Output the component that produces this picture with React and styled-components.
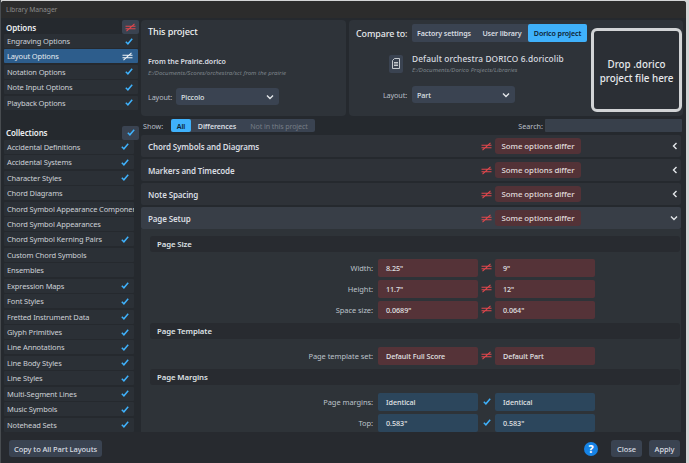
import React from "react";
import styled, { createGlobalStyle } from "styled-components";

const Global = createGlobalStyle`
  html, body { margin: 0; padding: 0; background: #d4d5d6; }
  * { box-sizing: border-box; }
  body { font-family: "Noto Sans", "Open Sans", sans-serif; }
`;

const Page = styled.div`
  width: 689px;
  height: 463px;
  overflow: hidden;
  padding: 1px 3px 0 0;
  border-left: 1px solid #484c50;
  background: #d4d5d6;
`;
const Dialog = styled.div`
  width: 685px;
  height: 462px;
  display: flex;
  flex-direction: column;
  background: #25292e;
  border-radius: 3px 3px 0 0;
  overflow: hidden;
`;
const TitleBar = styled.div`
  height: 17px;
  flex: none;
  background: #2c2c2c;
  color: #8a8a8a;
  font-size: 6.8px;
  letter-spacing: -0.1px;
  line-height: 17px;
  padding-left: 5px;
`;
const Main = styled.div`
  flex: 1;
  min-height: 0;
  display: flex;
  gap: 2px;
  padding: 2px 0 0 3px;
`;
const Side = styled.aside`
  width: 135px;
  flex: none;
  overflow: hidden;
`;
const SideHead = styled.div`
  display: flex;
  align-items: center;
  justify-content: space-between;
  height: 14px;
  margin-top: ${(p) => (p.$second ? "16px" : "0")};
  color: #eceef0;
  font-size: 8px;
  letter-spacing: -0.12px;
  font-weight: 600;
  padding-left: 2px;
`;
const SquareBtn = styled.div`
  width: 17px;
  height: 14px;
  border-radius: 2px;
  background: #3a4351;
  display: flex;
  align-items: center;
  justify-content: center;
`;
const ListRow = styled.div`
  width: ${(p) => (p.$short ? "129.5px" : "134px")};
  height: 14px;
  margin-bottom: 1.45px;
  padding: 0 5px 0 3px;
  display: flex;
  align-items: center;
  justify-content: space-between;
  background: ${(p) => (p.$active ? "#2d5d8c" : "#2b3036")};
  border-radius: 1px;
  color: ${(p) => (p.$active ? "#e4eaf0" : "#cdd1d6")};
  font-size: 7.5px;
  letter-spacing: -0.14px;
  white-space: nowrap;
  overflow: hidden;
`;
const RowLabel = styled.span`
  flex: 1;
  min-width: 0;
`;
const Content = styled.main`
  flex: 1;
  min-width: 0;
  display: flex;
  flex-direction: column;
`;
const TopPanels = styled.div`
  display: flex;
  gap: 3px;
  height: 96px;
  flex: none;
  padding-right: 3px;
`;
const Panel = styled.section`
  background: #2e3339;
  border-radius: 4px;
`;
const ProjectPanel = styled(Panel)`
  width: 205px;
  padding: 5px 7px;
`;
const PanelTitle = styled.h2`
  margin: 0;
  font-size: 9.2px;
  letter-spacing: -0.12px;
  line-height: 14px;
  font-weight: 500;
  color: #eef0f2;
`;
const FileName = styled.div`
  font-size: ${(p) => (p.$wide ? "8.3px" : "7.1px")};
  letter-spacing: ${(p) => (p.$wide ? "0.12px" : "-0.08px")};
  line-height: 11px;
  font-weight: ${(p) => (p.$wide ? 500 : 600)};
  color: #d9dce0;
  white-space: nowrap;
  margin-top: ${(p) => p.$top || 0}px;
`;
const FilePath = styled.div`
  font-size: 6.1px;
  line-height: 9px;
  font-style: italic;
  color: #7d838a;
  white-space: nowrap;
  margin-top: 1px;
`;
const LayoutRow = styled.div`
  display: flex;
  align-items: center;
  gap: 5px;
  margin-top: ${(p) => p.$top}px;
`;
const LayoutLabel = styled.span`
  font-size: 7.2px;
  letter-spacing: -0.1px;
  color: #b9bfc6;
  width: ${(p) => p.$w}px;
  text-align: right;
`;
const Select = styled.div`
  width: 103px;
  height: 17px;
  background: #3a4351;
  border-radius: 3px;
  padding: 0 5px;
  display: flex;
  align-items: center;
  justify-content: space-between;
  color: #dfe2e6;
  font-size: 7.2px;
  letter-spacing: -0.1px;
  font-weight: 500;
`;
const ComparePanel = styled(Panel)`
  flex: 1;
  display: flex;
  padding: 4px 1px 4px 7px;
  gap: 4px;
`;
const CompareMain = styled.div`
  width: 231px;
  flex: none;
`;
const CompareTop = styled.div`
  display: flex;
  align-items: center;
  gap: 5px;
  height: 18px;
`;
const CompareLabel = styled.span`
  width: 51px;
  font-size: 8.9px;
  letter-spacing: -0.08px;
  font-weight: 500;
  color: #e6e9ec;
  white-space: nowrap;
`;
const Segments = styled.div`
  display: flex;
  background: #3a4351;
  border-radius: 2px;
  height: ${(p) => (p.$small ? "13px" : "18px")};
`;
const Segment = styled.div`
  display: flex;
  align-items: center;
  justify-content: center;
  width: ${(p) => p.$w}px;
  border-radius: 2px;
  background: ${(p) => (p.$on ? "#3fb1fb" : "transparent")};
  color: ${(p) => (p.$on ? "#0d2233" : p.$dim ? "#767d86" : "#d8dce0")};
  font-size: 7.1px;
  letter-spacing: -0.1px;
  font-weight: ${(p) => (p.$dim ? 400 : 600)};
  white-space: nowrap;
`;
const LibRow = styled.div`
  display: flex;
  align-items: center;
  gap: 9px;
  margin: 11px 0 0 33px;
`;
const DocBox = styled.div`
  width: 14px;
  height: 18px;
  background: #3a4351;
  border-radius: 2px;
  display: flex;
  align-items: center;
  justify-content: center;
`;
const DropZone = styled.div`
  flex: 1;
  margin-top: 4px;
  padding-top: 3px;
  border: 3px solid #d2d4d6;
  border-radius: 6px;
  display: flex;
  align-items: center;
  justify-content: center;
  text-align: center;
  background: #2b2f35;
  color: #e6e9ec;
  font-size: 9.8px;
  line-height: 13.5px;
  font-weight: 500;
`;
const ShowBar = styled.div`
  height: 13px;
  flex: none;
  margin: 3px 4px 3px 2px;
  display: flex;
  align-items: center;
`;
const ShowLabel = styled.span`
  font-size: 7.2px;
  width: 28px;
  color: #b9bfc6;
`;
const SearchLabel = styled.span`
  font-size: 7.2px;
  color: #b9bfc6;
  margin-right: 2px;
`;
const Spacer = styled.div`
  flex: 1;
`;
const SearchBox = styled.div`
  width: 137px;
  height: 13px;
  background: #38404b;
  border-radius: 1px;
`;
const Sections = styled.div`
  flex: 1;
  min-height: 0;
  width: 540px;
  display: flex;
  flex-direction: column;
  gap: 2px;
  overflow: hidden;
`;
const SectionHead = styled.div`
  height: 22px;
  flex: none;
  background: ${(p) => (p.$open ? "#383e47" : "#2e3238")};
  border-radius: 2px;
  display: flex;
  align-items: center;
  padding-left: 7px;
`;
const SectionTitle = styled.div`
  flex: 1;
  font-size: 8px;
  letter-spacing: -0.13px;
  font-weight: 600;
  color: #d8dce0;
`;
const Pill = styled.div`
  width: 86px;
  height: 16px;
  margin-left: 3px;
  background: #533237;
  border-radius: 3px;
  display: flex;
  align-items: center;
  justify-content: center;
  font-size: 7.9px;
  letter-spacing: -0.06px;
  font-weight: 500;
  color: #e0dcdc;
`;
const ChevronSlot = styled.div`
  width: 100px;
  display: flex;
  justify-content: flex-end;
  padding-right: 3px;
`;
const SectionBody = styled.div`
  flex: 1;
  min-height: 0;
  margin-top: -2px;
  padding: 7px 1px 0 9px;
  background: #2e3338;
  overflow: hidden;
`;
const GroupHead = styled.div`
  height: 16px;
  margin-top: ${(p) => (p.$first ? 0 : 4)}px;
  margin-bottom: ${(p) => (p.$first ? 6 : 7)}px;
  padding-left: 7px;
  background: #282b30;
  border-radius: 3px;
  font-size: 7.8px;
  letter-spacing: -0.1px;
  line-height: 16px;
  font-weight: 600;
  color: #dfe2e5;
`;
const OptionRow = styled.div`
  display: grid;
  grid-template-columns: 228px 100px 17px 100px;
  align-items: center;
  height: 19px;
  margin-bottom: 2px;
`;
const OptionLabel = styled.div`
  font-size: 7.5px;
  letter-spacing: -0.06px;
  color: #bcc2c9;
  text-align: right;
  padding-right: 5px;
`;
const Value = styled.div`
  height: 18px;
  border-radius: 2px;
  padding-left: 8px;
  background: ${(p) => (p.$same ? "#2c465c" : "#553338")};
  color: #e2e4e6;
  font-size: 7.2px;
  letter-spacing: -0.05px;
  font-weight: 500;
  line-height: 18px;
`;
const Mark = styled.div`
  display: flex;
  justify-content: center;
`;
const Footer = styled.footer`
  height: 31px;
  flex: none;
  display: flex;
  align-items: flex-start;
  padding: 8px 6px 0 8px;
  gap: 7px;
  background: #272a2f;
`;
const Button = styled.div`
  height: 17px;
  padding: 0 5px;
  min-width: 31px;
  border-radius: 3px;
  background: #3a4351;
  display: flex;
  align-items: center;
  justify-content: center;
  color: #d9dde2;
  font-size: 7.5px;
  letter-spacing: -0.08px;
  font-weight: 500;
  white-space: nowrap;
`;
const Help = styled.div`
  width: 14px;
  height: 14px;
  margin: 2px 6px 0 0;
  border-radius: 50%;
  background: #1683e6;
  display: flex;
  align-items: center;
  justify-content: center;
  color: #fff;
  font-size: 10.5px;
  font-weight: 800;
`;

const Neq = ({ white }) => (
  <svg width="11" height="9" viewBox="0 0 11 9" fill="none" stroke={white ? "#eef2f6" : "#e2474c"} strokeWidth="1.1">
    <path d="M0.5 3.2H10.5M0.5 5.8H10.5M9.5 0.8L1.5 8.2" />
  </svg>
);
const Tick = () => (
  <svg width="8" height="7" viewBox="0 0 8 7" fill="none" stroke="#3fb1fb" strokeWidth="1.5" style={{ flex: "none" }}>
    <path d="M0.8 3.8L2.9 5.8L7.2 0.8" />
  </svg>
);
const ChevronDown = () => (
  <svg width="8" height="6" viewBox="0 0 8 6" fill="none" stroke="#e4e7ea" strokeWidth="1.4">
    <path d="M1 1.5L4 4.5L7 1.5" />
  </svg>
);
const ChevronLeft = () => (
  <svg width="6" height="8" viewBox="0 0 6 8" fill="none" stroke="#e4e7ea" strokeWidth="1.4">
    <path d="M4.5 1L1.5 4L4.5 7" />
  </svg>
);
const DocIcon = () => (
  <svg width="8" height="11" viewBox="0 0 8 11" fill="none" stroke="#d5d9dd" strokeWidth="0.9">
    <path d="M2.5 0.5H7.5V10.5H0.5V2.5ZM2 4.5H6M2 6H6M2 7.5H6" />
  </svg>
);

const options = [
  ["Engraving Options"],
  ["Layout Options", true],
  ["Notation Options"],
  ["Note Input Options"],
  ["Playback Options"],
];
const collections = [
  ["Accidental Definitions", 1],
  ["Accidental Systems", 1],
  ["Character Styles", 1],
  ["Chord Diagrams", 0],
  ["Chord Symbol Appearance Components", 0],
  ["Chord Symbol Appearances", 0],
  ["Chord Symbol Kerning Pairs", 1],
  ["Custom Chord Symbols", 0],
  ["Ensembles", 0],
  ["Expression Maps", 1],
  ["Font Styles", 1],
  ["Fretted Instrument Data", 1],
  ["Glyph Primitives", 1],
  ["Line Annotations", 1],
  ["Line Body Styles", 1],
  ["Line Styles", 1],
  ["Multi-Segment Lines", 1],
  ["Music Symbols", 1],
  ["Notehead Sets", 1],
];
const groups = [
  ["Chord Symbols and Diagrams"],
  ["Markers and Timecode"],
  ["Note Spacing"],
];
const pageGroups = [
  ["Page Size", [["Width:", '8.25"', '9"'], ["Height:", '11.7"', '12"'], ["Space size:", '0.0689"', '0.064"']]],
  ["Page Template", [["Page template set:", "Default Full Score", "Default Part"]]],
  ["Page Margins", [["Page margins:", "Identical", "Identical", 1], ["Top:", '0.583"', '0.583"', 1]]],
];

export default function App() {
  return (
    <Page>
      <Global />
      <Dialog>
        <TitleBar>Library Manager</TitleBar>
        <Main>
          <Side>
            <SideHead>
              Options
              <SquareBtn><Neq /></SquareBtn>
            </SideHead>
            {options.map(([name, active]) => (
              <ListRow key={name} $active={active}>
                <RowLabel>{name}</RowLabel>
                {active ? <Neq white /> : <Tick />}
              </ListRow>
            ))}
            <SideHead $second>
              Collections
              <SquareBtn><Tick /></SquareBtn>
            </SideHead>
            {collections.map(([name, ok]) => (
              <ListRow key={name} $short>
                <RowLabel>{name}</RowLabel>
                {ok ? <Tick /> : null}
              </ListRow>
            ))}
          </Side>
          <Content>
            <TopPanels>
              <ProjectPanel>
                <PanelTitle>This project</PanelTitle>
                <FileName $top={17}>From the Prairie.dorico</FileName>
                <FilePath>E:/Documents/Scores/orchestra/sct from the prairie</FilePath>
                <LayoutRow $top={11}>
                  <LayoutLabel $w={23}>Layout:</LayoutLabel>
                  <Select>Piccolo<ChevronDown /></Select>
                </LayoutRow>
              </ProjectPanel>
              <ComparePanel>
                <CompareMain>
                  <CompareTop>
                    <CompareLabel>Compare to:</CompareLabel>
                    <Segments>
                      <Segment $w={64}>Factory settings</Segment>
                      <Segment $w={52}>User library</Segment>
                      <Segment $w={59} $on>Dorico project</Segment>
                    </Segments>
                  </CompareTop>
                  <LibRow>
                    <DocBox><DocIcon /></DocBox>
                    <div>
                      <FileName $wide>Default orchestra DORICO 6.doricolib</FileName>
                      <FilePath>E:/Documents/Dorico Projects/Libraries</FilePath>
                    </div>
                  </LibRow>
                  <LayoutRow $top={12}>
                    <LayoutLabel $w={51}>Layout:</LayoutLabel>
                    <Select>Part<ChevronDown /></Select>
                  </LayoutRow>
                </CompareMain>
                <DropZone>Drop .dorico<br />project file here</DropZone>
              </ComparePanel>
            </TopPanels>
            <ShowBar>
              <ShowLabel>Show:</ShowLabel>
              <Segments $small>
                <Segment $w={20} $on>All</Segment>
                <Segment $w={52}>Differences</Segment>
                <Segment $w={72} $dim>Not in this project</Segment>
              </Segments>
              <Spacer />
              <SearchLabel>Search:</SearchLabel>
              <SearchBox />
            </ShowBar>
            <Sections>
              {groups.map(([t]) => (
                <SectionHead key={t}>
                  <SectionTitle>{t}</SectionTitle>
                  <Neq />
                  <Pill>Some options differ</Pill>
                  <ChevronSlot><ChevronLeft /></ChevronSlot>
                </SectionHead>
              ))}
              <SectionHead $open>
                <SectionTitle>Page Setup</SectionTitle>
                <Neq />
                <Pill>Some options differ</Pill>
                <ChevronSlot><ChevronDown /></ChevronSlot>
              </SectionHead>
              <SectionBody>
                {pageGroups.map(([title, rows], i) => (
                  <div key={title}>
                    <GroupHead $first={i === 0}>{title}</GroupHead>
                    {rows.map(([label, a, b, same]) => (
                      <OptionRow key={label}>
                        <OptionLabel>{label}</OptionLabel>
                        <Value $same={same}>{a}</Value>
                        <Mark>{same ? <Tick /> : <Neq />}</Mark>
                        <Value $same={same}>{b}</Value>
                      </OptionRow>
                    ))}
                  </div>
                ))}
              </SectionBody>
            </Sections>
          </Content>
        </Main>
        <Footer>
          <Button>Copy to All Part Layouts</Button>
          <Spacer />
          <Help>?</Help>
          <Button>Close</Button>
          <Button>Apply</Button>
        </Footer>
      </Dialog>
    </Page>
  );
}
